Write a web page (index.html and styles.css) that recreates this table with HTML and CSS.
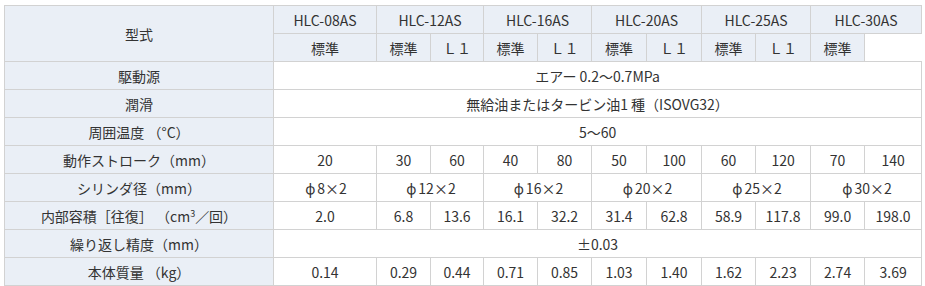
FILE: index.html
```html
<!DOCTYPE html>
<html lang="ja">
<head>
<meta charset="utf-8">
<link rel="stylesheet" href="styles.css">
</head>
<body>
<table class="spec">
<colgroup>
<col class="c-label">
<col class="c-08"><col class="c-a"><col class="c-b"><col class="c-a"><col class="c-a"><col class="c-c"><col class="c-c"><col class="c-a"><col class="c-c"><col class="c-a"><col class="c-d">
</colgroup>
<tr>
<th class="hd" rowspan="2">型式</th>
<th class="hd">HLC-08AS</th>
<th class="hd" colspan="2">HLC-12AS</th>
<th class="hd" colspan="2">HLC-16AS</th>
<th class="hd" colspan="2">HLC-20AS</th>
<th class="hd" colspan="2">HLC-25AS</th>
<th class="hd" colspan="2">HLC-30AS</th>
</tr>
<tr>
<th class="hd">標準</th>
<th class="hd">標準</th><th class="hd">Ｌ１</th>
<th class="hd">標準</th><th class="hd">Ｌ１</th>
<th class="hd">標準</th><th class="hd">Ｌ１</th>
<th class="hd">標準</th><th class="hd">Ｌ１</th>
<th class="hd">標準</th>
</tr>
<tr><th class="hd">駆動源</th><td colspan="11">エアー 0.2～0.7MPa</td></tr>
<tr><th class="hd">潤滑</th><td colspan="11">無給油またはタービン油1 種（ISOVG32）</td></tr>
<tr><th class="hd">周囲温度 （°C）</th><td colspan="11">5～60</td></tr>
<tr><th class="hd">動作ストローク（mm）</th><td>20</td><td>30</td><td>60</td><td>40</td><td>80</td><td>50</td><td>100</td><td>60</td><td>120</td><td>70</td><td>140</td></tr>
<tr><th class="hd">シリンダ径（mm）</th><td><span class="phi">ϕ</span>8×2</td><td colspan="2"><span class="phi">ϕ</span>12×2</td><td colspan="2"><span class="phi">ϕ</span>16×2</td><td colspan="2"><span class="phi">ϕ</span>20×2</td><td colspan="2"><span class="phi">ϕ</span>25×2</td><td colspan="2"><span class="phi">ϕ</span>30×2</td></tr>
<tr><th class="hd">内部容積［往復］ （cm<sup>3</sup>／回）</th><td>2.0</td><td>6.8</td><td>13.6</td><td>16.1</td><td>32.2</td><td>31.4</td><td>62.8</td><td>58.9</td><td>117.8</td><td>99.0</td><td>198.0</td></tr>
<tr><th class="hd">繰り返し精度（mm）</th><td colspan="11">±0.03</td></tr>
<tr><th class="hd">本体質量 （kg）</th><td>0.14</td><td>0.29</td><td>0.44</td><td>0.71</td><td>0.85</td><td>1.03</td><td>1.40</td><td>1.62</td><td>2.23</td><td>2.74</td><td>3.69</td></tr>
</table>
</body>
</html>
```
FILE: styles.css
```css
html, body {
  margin: 0;
  padding: 0;
  background: #fff;
}
body {
  padding: 5px 0 0 4px;
  font-family: "Noto Sans CJK JP", "Noto Sans", sans-serif;
  font-size: 14px;
  color: #333;
}
.spec {
  border-collapse: collapse;
  table-layout: fixed;
  width: 918px;
}
.c-label { width: 269px; }
.c-08 { width: 103px; }
.c-a { width: 54px; }
.c-b { width: 53px; }
.c-c { width: 55px; }
.c-d { width: 57px; }
.spec th, .spec td {
  border: 1px solid #d2d2d2;
  height: 27px;
  padding: 0;
  text-align: center;
  vertical-align: middle;
  font-weight: 400;
  line-height: 20px;
  white-space: nowrap;
}
.spec .hd {
  background: #eaeff6;
}
.spec sup {
  font-size: 9px;
  line-height: 0;
  vertical-align: 5px;
}
.phi {
  display: inline-block;
  width: 1em;
  text-align: center;
}
```
